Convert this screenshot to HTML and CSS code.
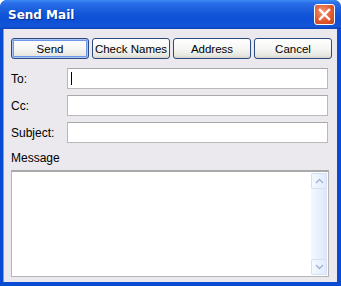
FILE: index.html
```html
<!DOCTYPE html>
<html lang="en">
<head>
    <meta charset="UTF-8">
    <title>Send Mail</title>
    <link rel="stylesheet" href="styles.css">
</head>
<body>

<div class="window">
    <div class="titlebar">
        <span class="title">Send Mail</span>
        <button class="close" aria-label="Close">
            <svg width="13" height="13" viewBox="0 0 13 13">
                <path d="M2 2 L11 11 M11 2 L2 11" stroke="#fff" stroke-width="2.4" stroke-linecap="square"/>
            </svg>
        </button>
    </div>
    <div class="content">
        <div class="actions">
            <button class="btn default">Send</button>
            <button class="btn">Check Names</button>
            <button class="btn">Address</button>
            <button class="btn">Cancel</button>
        </div>
        <div class="fields">
            <label class="label">To:</label>
            <div class="field"><span class="caret"></span></div>
            <label class="label">Cc:</label>
            <div class="field"></div>
            <label class="label">Subject:</label>
            <div class="field"></div>
        </div>
        <div class="message-label">Message</div>
        <div class="message">
            <div class="scrollbar">
                <div class="arrow">
                    <svg width="9" height="6" viewBox="0 0 9 6"><path d="M1 5 L4.5 1.5 L8 5" fill="none" stroke="#9fb3d6" stroke-width="1.4"/></svg>
                </div>
                <div class="arrow">
                    <svg width="9" height="6" viewBox="0 0 9 6"><path d="M1 1 L4.5 4.5 L8 1" fill="none" stroke="#9fb3d6" stroke-width="1.4"/></svg>
                </div>
            </div>
        </div>
    </div>
</div>

</body>
</html>
```

FILE: styles.css
```css
body {
    margin: 0;
    font-family: "Liberation Sans", Arial, sans-serif;
    background: #fff;
}

.window {
    width: 341px;
    height: 286px;
    display: flex;
    flex-direction: column;
    border-radius: 7px 7px 0 0;
    overflow: hidden;
    background: #0a4bd4;
}

.titlebar {
    height: 29px;
    display: flex;
    align-items: center;
    justify-content: space-between;
    padding: 0 6px 0 8px;
    background: linear-gradient(to bottom, #3d8cf5 0%, #2a6fe8 10%, #1457d9 45%, #0d4fd6 70%, #1256d8 90%, #0b43b8 100%);
}

.title {
    color: #fff;
    font-family: "DejaVu Sans", sans-serif;
    font-weight: bold;
    font-size: 12px;
    text-shadow: 1px 1px 0 #0b2f8a;
    padding-top: 1px;
}

.close {
    width: 21px;
    height: 21px;
    padding: 0;
    border: 1px solid #fff;
    border-radius: 3px;
    background: radial-gradient(circle at 40% 35%, #f29a74, #e0542a 60%, #c1421c);
    display: flex;
    align-items: center;
    justify-content: center;
}

.content {
    flex: 1;
    margin: 0 4px 4px 3px;
    background: #ebe9ed;
    padding: 9px 7px 0 7px;
    display: flex;
    flex-direction: column;
    border-left: 1px solid #7a9fe6;
}

.actions {
    display: grid;
    grid-template-columns: repeat(4, 78px);
    gap: 3px;
    margin-bottom: 9px;
}

.btn {
    height: 21px;
    padding: 0;
    border: 1px solid #2a4a80;
    border-radius: 3px;
    background: linear-gradient(to bottom, #ffffff 0%, #f6f6f4 50%, #e8e8e2 85%, #d8d4cc 100%);
    font-family: "Liberation Sans", Arial, sans-serif;
    font-size: 11.5px;
    color: #000;
}

.btn.default {
    box-shadow: inset 0 0 0 1px #a9c4f5, inset 0 0 0 2px #6d97e8;
}

.fields {
    display: grid;
    grid-template-columns: 56px 1fr;
    row-gap: 6px;
    align-items: center;
    margin-right: 2px;
}

.label {
    font-size: 12px;
    color: #000;
}

.field {
    height: 19px;
    background: #fff;
    border: 1px solid #b9b9b9;
    border-top-color: #a8a8a8;
    position: relative;
}

.caret {
    position: absolute;
    left: 3px;
    top: 3px;
    width: 1px;
    height: 13px;
    background: #000;
}

.message-label {
    font-size: 12px;
    margin: 8px 0 5px;
}

.message {
    height: 104px;
    background: #fff;
    border: 1px solid #b5b5b5;
    border-top: 2px solid #a9a9a9;
    display: flex;
    justify-content: flex-end;
    margin-right: 1px;
}

.scrollbar {
    width: 16px;
    margin: 1px 1px 1px 0;
    background: linear-gradient(to right, #f5f8fe, #e6eefc 60%, #dbe6fa);
    display: flex;
    flex-direction: column;
    justify-content: space-between;
}

.arrow {
    height: 16px;
    border: 1px solid #d4e0f7;
    border-radius: 2px;
    background: linear-gradient(to right, #f4f8ff, #e2ebfc);
    display: flex;
    align-items: center;
    justify-content: center;
    box-sizing: border-box;
}
```
